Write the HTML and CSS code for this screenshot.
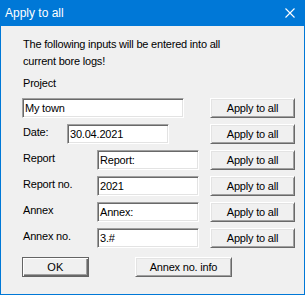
FILE: index.html
```html
<!DOCTYPE html>
<html>
<head>
<meta charset="utf-8">
<link rel="stylesheet" href="styles.css">
</head>
<body>
<div class="window">
  <div class="titlebar">
    <span class="title">Apply to all</span>
    <svg class="close" width="10" height="10" viewBox="0 0 10 10"><path d="M0.5 0.5 L9.5 9.5 M9.5 0.5 L0.5 9.5" stroke="#fff" stroke-width="1.1" fill="none"/></svg>
  </div>
  <div class="content">
    <p class="intro">The following inputs will be entered into all<br>current bore logs!</p>
    <div class="caption">Project</div>
    <div class="rows">
      <div class="row">
        <div class="edit w-long">My town</div>
        <button class="btn apply">Apply to all</button>
      </div>
      <div class="row">
        <div class="label l-short">Date:</div>
        <div class="edit w-mid">30.04.2021</div>
        <button class="btn apply">Apply to all</button>
      </div>
      <div class="row">
        <div class="label l-long">Report</div>
        <div class="edit w-mid">Report:</div>
        <button class="btn apply">Apply to all</button>
      </div>
      <div class="row">
        <div class="label l-long">Report no.</div>
        <div class="edit w-mid">2021</div>
        <button class="btn apply">Apply to all</button>
      </div>
      <div class="row">
        <div class="label l-long">Annex</div>
        <div class="edit w-mid">Annex:</div>
        <button class="btn apply">Apply to all</button>
      </div>
      <div class="row">
        <div class="label l-long">Annex no.</div>
        <div class="edit w-mid">3.#</div>
        <button class="btn apply">Apply to all</button>
      </div>
    </div>
    <div class="footer">
      <button class="btn default ok">OK</button>
      <button class="btn info">Annex no. info</button>
    </div>
  </div>
</div>
</body>
</html>
```
FILE: styles.css
```css
html, body {
  margin: 0;
  padding: 0;
  background: #f0f0f0;
}
.window {
  width: 305px;
  height: 295px;
  box-sizing: border-box;
  border: 1px solid #0078d7;
  border-top: none;
  background: #f0f0f0;
  font-family: "Liberation Sans", Arial, sans-serif;
  font-size: 11px;
  letter-spacing: -0.2px;
  color: #000;
}
.titlebar {
  height: 26px;
  background: #0078d7;
  display: flex;
  align-items: center;
  justify-content: space-between;
  padding: 0 9px 0 4px;
}
.title {
  color: #fff;
  font-size: 12px;
  letter-spacing: 0;
  line-height: 26px;
}
.close {
  display: block;
  margin-top: -1px;
}
.content {
  padding: 10px 9px 0 21px;
}
.intro {
  margin: 0;
  line-height: 17px;
  padding-left: 1px;
}
.caption {
  margin-top: 5px;
  line-height: 17px;
  padding-left: 1px;
}
.rows {
  margin-top: 6px;
  display: flex;
  flex-direction: column;
  gap: 6px;
}
.row {
  display: flex;
  align-items: flex-start;
  height: 20px;
}
.label {
  line-height: 16px;
  padding-left: 1px;
  box-sizing: border-box;
}
.l-short { width: 45px; }
.l-long { width: 75px; }
.edit {
  height: 20px;
  box-sizing: border-box;
  background: #fff;
  border: 1px solid;
  border-color: #a0a0a0 #fff #fff #a0a0a0;
  box-shadow: inset 1px 1px #696969, inset -1px -1px #e3e3e3;
  padding: 1px 0 0 2px;
  line-height: 16px;
  white-space: nowrap;
}
.w-long { width: 162px; }
.w-mid { width: 102px; }
.btn {
  font-family: "Liberation Sans", Arial, sans-serif;
  font-size: 11px;
  letter-spacing: -0.2px;
  color: #000;
  background: #f0f0f0;
  height: 20px;
  box-sizing: border-box;
  border: 1px solid;
  border-color: #fff #696969 #696969 #fff;
  box-shadow: inset 1px 1px #e3e3e3, inset -1px -1px #a0a0a0;
  padding: 0;
  margin: 0;
  line-height: 16px;
  text-align: center;
}
.apply {
  width: 85px;
  margin-left: auto;
}
.footer {
  margin-top: 9px;
  display: flex;
  align-items: flex-start;
}
.default {
  border: 1px solid #646464;
  box-shadow: inset 1px 1px #fff, inset -1px -1px #696969, inset -2px -2px #a0a0a0;
}
.ok {
  width: 67px;
  letter-spacing: 0.3px;
}
.info {
  width: 97px;
  margin-left: 46px;
}
```
